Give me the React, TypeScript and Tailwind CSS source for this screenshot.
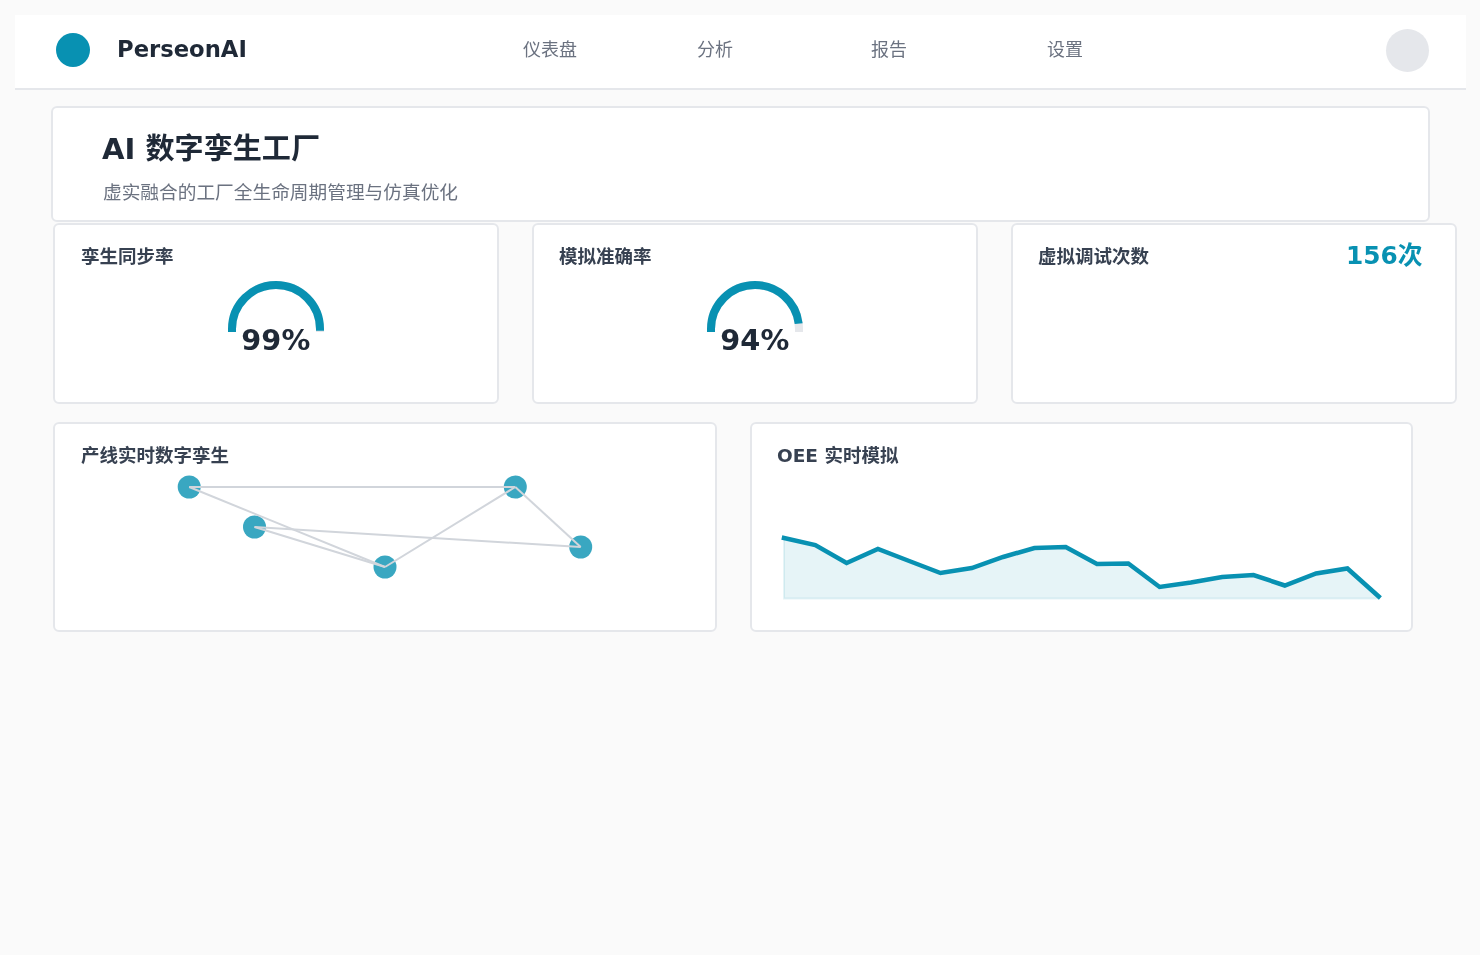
const font = { fontFamily: '"DejaVu Sans", "Noto Sans CJK SC", sans-serif' };

const nodes = [
  [189.2, 487],
  [254.5, 527],
  [385, 567],
  [515.3, 487],
  [580.7, 547],
];

const links = [
  [0, 3],
  [0, 2],
  [1, 2],
  [1, 4],
  [2, 3],
  [3, 4],
];

const oee = [
  538, 545, 563, 549, 561, 573, 568, 557, 548, 547, 564, 563.5, 587, 582.5, 577, 575, 585.5, 573.5, 568.5, 596.5,
];

function Gauge({ value }: { value: number }) {
  const arc = "M4 51V48A44 44 0 0 1 92 48V51";
  const len = Math.PI * 44 + 6;
  return (
    <div className="flex flex-col items-center">
      <svg width="96" height="51" viewBox="0 0 96 51" className="mt-[11px]">
        <path d={arc} fill="none" stroke="#e5e7eb" strokeWidth="8" />
        <path d={arc} fill="none" stroke="#0891b2" strokeWidth="8" strokeDasharray={`${(len * value) / 100} ${len}`} />
      </svg>
      <div className="-mt-[9px] pl-[0.3px] text-[28.8px] leading-[34px] font-bold text-[#1f2937] will-change-transform">{value}%</div>
    </div>
  );
}

function StatCard({ title, value, count }: { title: string; value?: number; count?: string }) {
  return (
    <div className="h-[180.5px] rounded-md border-2 border-[#e5e7eb] bg-white px-[25.6px] pt-[19px]">
      <div className="flex items-center justify-between">
        <h3 className="text-[18.5px] leading-[26px] font-bold text-[#374151] will-change-transform">{title}</h3>
        {count && (
          <span className="mr-[6.5px] -mt-[2px] text-[24.8px] leading-[26px] font-bold text-[#0891b2] will-change-transform">{count}</span>
        )}
      </div>
      {value !== undefined && <Gauge value={value} />}
    </div>
  );
}

function TwinChart() {
  return (
    <svg width="608" height="140" viewBox="81 470 608 140" className="mt-px">
      {nodes.map(([x, y]) => (
        <circle key={x} cx={x} cy={y} r="11.5" fill="#0891b2" fillOpacity="0.8" />
      ))}
      {links.map(([a, b]) => (
        <line
          key={`${a}-${b}`}
          x1={nodes[a][0]}
          y1={nodes[a][1]}
          x2={nodes[b][0]}
          y2={nodes[b][1]}
          stroke="#d1d5db"
          strokeWidth="2"
        />
      ))}
    </svg>
  );
}

function OeeChart() {
  const pts = oee.map((y, i) => `${784 + i * 31.3},${y}`).join(" ");
  return (
    <svg width="608" height="140" viewBox="777 470 608 140" className="mt-px">
      <polygon
        points={`784,598.5 ${pts} 1378.7,598.5`}
        fill="#0891b2"
        fillOpacity="0.1"
        stroke="#0891b2"
        strokeOpacity="0.1"
        strokeWidth="2"
      />
      <polyline points={pts} fill="none" stroke="#0891b2" strokeWidth="4.5" strokeLinecap="square" />
    </svg>
  );
}

export default function App() {
  return (
    <div className="min-h-screen bg-[#fafafa] p-[15px]" style={font}>
      <header className="flex h-[75px] w-[1451px] items-center border-b-2 border-[#e5e7eb] bg-white pb-[3px] pl-[41px] pr-[37px]">
        <div className="h-[34px] w-[34px] rounded-full bg-[#0891b2]" />
        <div className="mb-[2px] ml-[26.5px] text-[22.7px] font-bold text-[#1f2937] will-change-transform">PerseonAI</div>
        <nav className="ml-[276.5px] flex text-lg text-[#6b7280] will-change-transform">
          <a>仪表盘</a>
          <a className="ml-[120px]">分析</a>
          <a className="ml-[138px]">报告</a>
          <a className="ml-[140px]">设置</a>
        </nav>
        <div className="ml-auto h-[43px] w-[43px] rounded-full bg-[#e5e7eb]" />
      </header>

      <main>
        <section className="ml-[36px] mt-[16px] h-[115.5px] w-[1379px] rounded-md border-2 border-[#e5e7eb] bg-white pl-[49px] pt-[23px]">
          <h1 className="text-[29.1px] leading-[36px] font-bold text-[#1f2937] will-change-transform">AI 数字孪生工厂</h1>
          <p className="mt-[13px] pl-px text-[18.7px] leading-[26px] text-[#6b7280] will-change-transform">虚实融合的工厂全生命周期管理与仿真优化</p>
        </section>

        <section className="ml-[38px] mt-[1.5px] grid w-[1403.5px] grid-cols-3 gap-[33px]">
          <StatCard title="孪生同步率" value={99} />
          <StatCard title="模拟准确率" value={94} />
          <StatCard title="虚拟调试次数" count="156次" />
        </section>

        <section className="ml-[38px] mt-[18.5px] grid w-[1360px] grid-cols-2 gap-[33px]">
          <div className="h-[209.5px] rounded-md border-2 border-[#e5e7eb] bg-white px-[25.7px] pt-[19px]">
            <h3 className="text-[18.5px] leading-[26px] font-bold text-[#374151] will-change-transform">产线实时数字孪生</h3>
            <TwinChart />
          </div>
          <div className="h-[209.5px] rounded-md border-2 border-[#e5e7eb] bg-white px-[25.7px] pt-[19px]">
            <h3 className="text-[18.5px] leading-[26px] font-bold text-[#374151] will-change-transform">OEE 实时模拟</h3>
            <OeeChart />
          </div>
        </section>
      </main>
    </div>
  );
}
